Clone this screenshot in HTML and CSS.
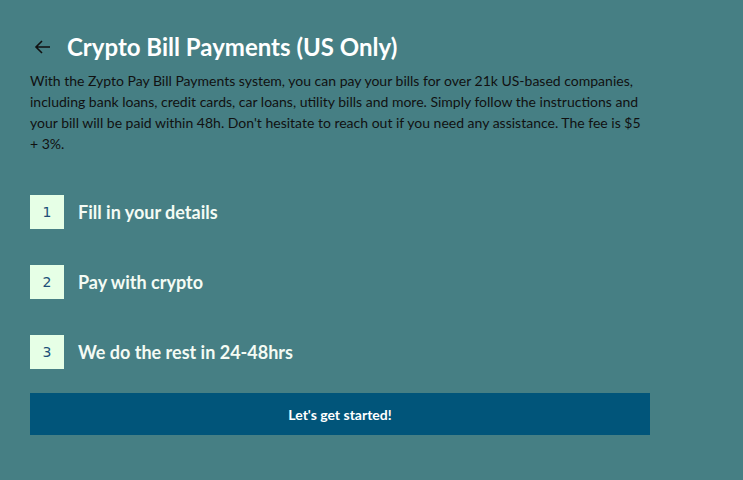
FILE: index.html
```html
<!DOCTYPE html>
<html>
<head>
<meta charset="utf-8">
<link rel="stylesheet" href="styles.css">
</head>
<body>
<main class="page">
  <header class="title-row">
    <svg class="back" width="18" height="14" viewBox="0 0 18 14" aria-hidden="true">
      <path d="M16 7H2M8 1L2 7l6 6" fill="none" stroke="#111" stroke-width="1.6"/>
    </svg>
    <h1 class="title">Crypto Bill Payments (US Only)</h1>
  </header>
  <p class="intro">With the Zypto Pay Bill Payments system, you can pay your bills for over 21k US-based companies, including bank loans, credit cards, car loans, utility bills and more. Simply follow the instructions and your bill will be paid within 48h. Don't hesitate to reach out if you need any assistance. The fee is $5 + 3%.</p>
  <ol class="steps">
    <li class="step"><span class="num">1</span><span class="label">Fill in your details</span></li>
    <li class="step"><span class="num">2</span><span class="label">Pay with crypto</span></li>
    <li class="step"><span class="num">3</span><span class="label">We do the rest in 24-48hrs</span></li>
  </ol>
  <button class="cta">Let's get started!</button>
</main>
</body>
</html>
```
FILE: styles.css
```css
html, body {
  margin: 0;
  padding: 0;
  background: #467f84;
  height: 100%;
}
body {
  font-family: Lato, "Liberation Sans", sans-serif;
}
.page {
  width: 620px;
  padding: 33px 0 0 30px;
}
.title-row {
  display: flex;
  align-items: center;
  gap: 15px;
  height: 28px;
}
.back {
  margin-left: 4px;
  flex: none;
}
.title {
  margin: 0;
  font-size: 24px;
  font-weight: 700;
  color: #ffffff;
  line-height: 28px;
}
.intro {
  margin: 9px 0 0;
  font-size: 14px;
  line-height: 21px;
  color: #111;
}
.steps {
  list-style: none;
  margin: 41px 0 0;
  padding: 0;
  display: flex;
  flex-direction: column;
  gap: 36px;
}
.step {
  display: flex;
  align-items: center;
  gap: 14px;
  height: 34px;
}
.num {
  width: 34px;
  height: 34px;
  flex: none;
  display: flex;
  align-items: center;
  justify-content: center;
  background: #e6ffe6;
  color: #1d4f78;
  font-family: "DejaVu Sans", sans-serif;
  font-size: 14px;
}
.label {
  font-size: 18px;
  font-weight: 700;
  color: #f4fbf4;
}
.cta {
  display: block;
  margin-top: 24px;
  width: 620px;
  height: 42px;
  border: 0;
  background: #01557a;
  color: #fff;
  font-family: Lato, "Liberation Sans", sans-serif;
  font-weight: 700;
  font-size: 14px;
  cursor: pointer;
}
```
